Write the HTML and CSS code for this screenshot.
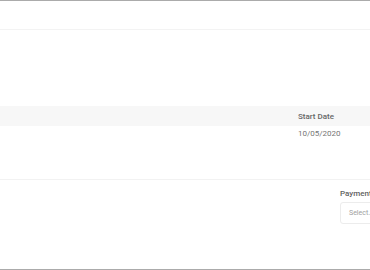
FILE: index.html
```html
<!DOCTYPE html>
<html lang="en">
<head>
  <meta charset="UTF-8" />
  <title>Contract</title>
  <link rel="stylesheet" href="styles.css">
</head>
<body>
  <div class="panel">
    <div class="toolbar"></div>
    <div class="spacer"></div>
    <div class="table">
      <div class="table-head">
        <span></span>
        <span class="cell">Start Date</span>
      </div>
      <div class="table-row">
        <span></span>
        <span class="cell">10/05/2020</span>
      </div>
    </div>
    <form class="form">
      <div class="field">
        <label for="payment">Payment Method</label>
        <div id="payment" class="select">Select...</div>
      </div>
    </form>
  </div>
</body>
</html>
```

FILE: styles.css
```css
html, body {
  margin: 0;
  padding: 0;
  overflow: hidden;
}
body {
  font-family: 'Roboto', sans-serif;
  background: #fff;
  color: #555;
}
.panel {
  width: 480px;
  height: 270px;
  box-sizing: border-box;
  border-top: 1px solid #ababab;
  border-bottom: 1px solid #ababab;
  display: flex;
  flex-direction: column;
}
.toolbar {
  height: 28px;
  border-bottom: 1px solid #f3f3f3;
}
.spacer {
  height: 76px;
}
.table-head, .table-row {
  display: grid;
  grid-template-columns: 298px 1fr;
  font-size: 8px;
}
.table-head {
  height: 20px;
  align-items: center;
  background: #f7f7f7;
  font-weight: 500;
  color: #666;
}
.table-row {
  height: 54px;
  padding-top: 3px;
  box-sizing: border-box;
  border-bottom: 1px solid #f2f2f2;
  color: #757575;
}
.form {
  flex: 1;
  display: flex;
  justify-content: flex-end;
  padding: 9px 0 0;
  margin: 0;
}
.field {
  width: 140px;
  display: flex;
  flex-direction: column;
}
.field label {
  font-size: 8px;
  font-weight: 500;
  color: #5f5f5f;
  height: 13px;
}
.select {
  height: 22px;
  box-sizing: border-box;
  border: 1px solid #ececec;
  border-radius: 3px;
  padding-left: 8px;
  font-size: 7px;
  color: #a0a0a0;
  display: flex;
  align-items: center;
}
```
